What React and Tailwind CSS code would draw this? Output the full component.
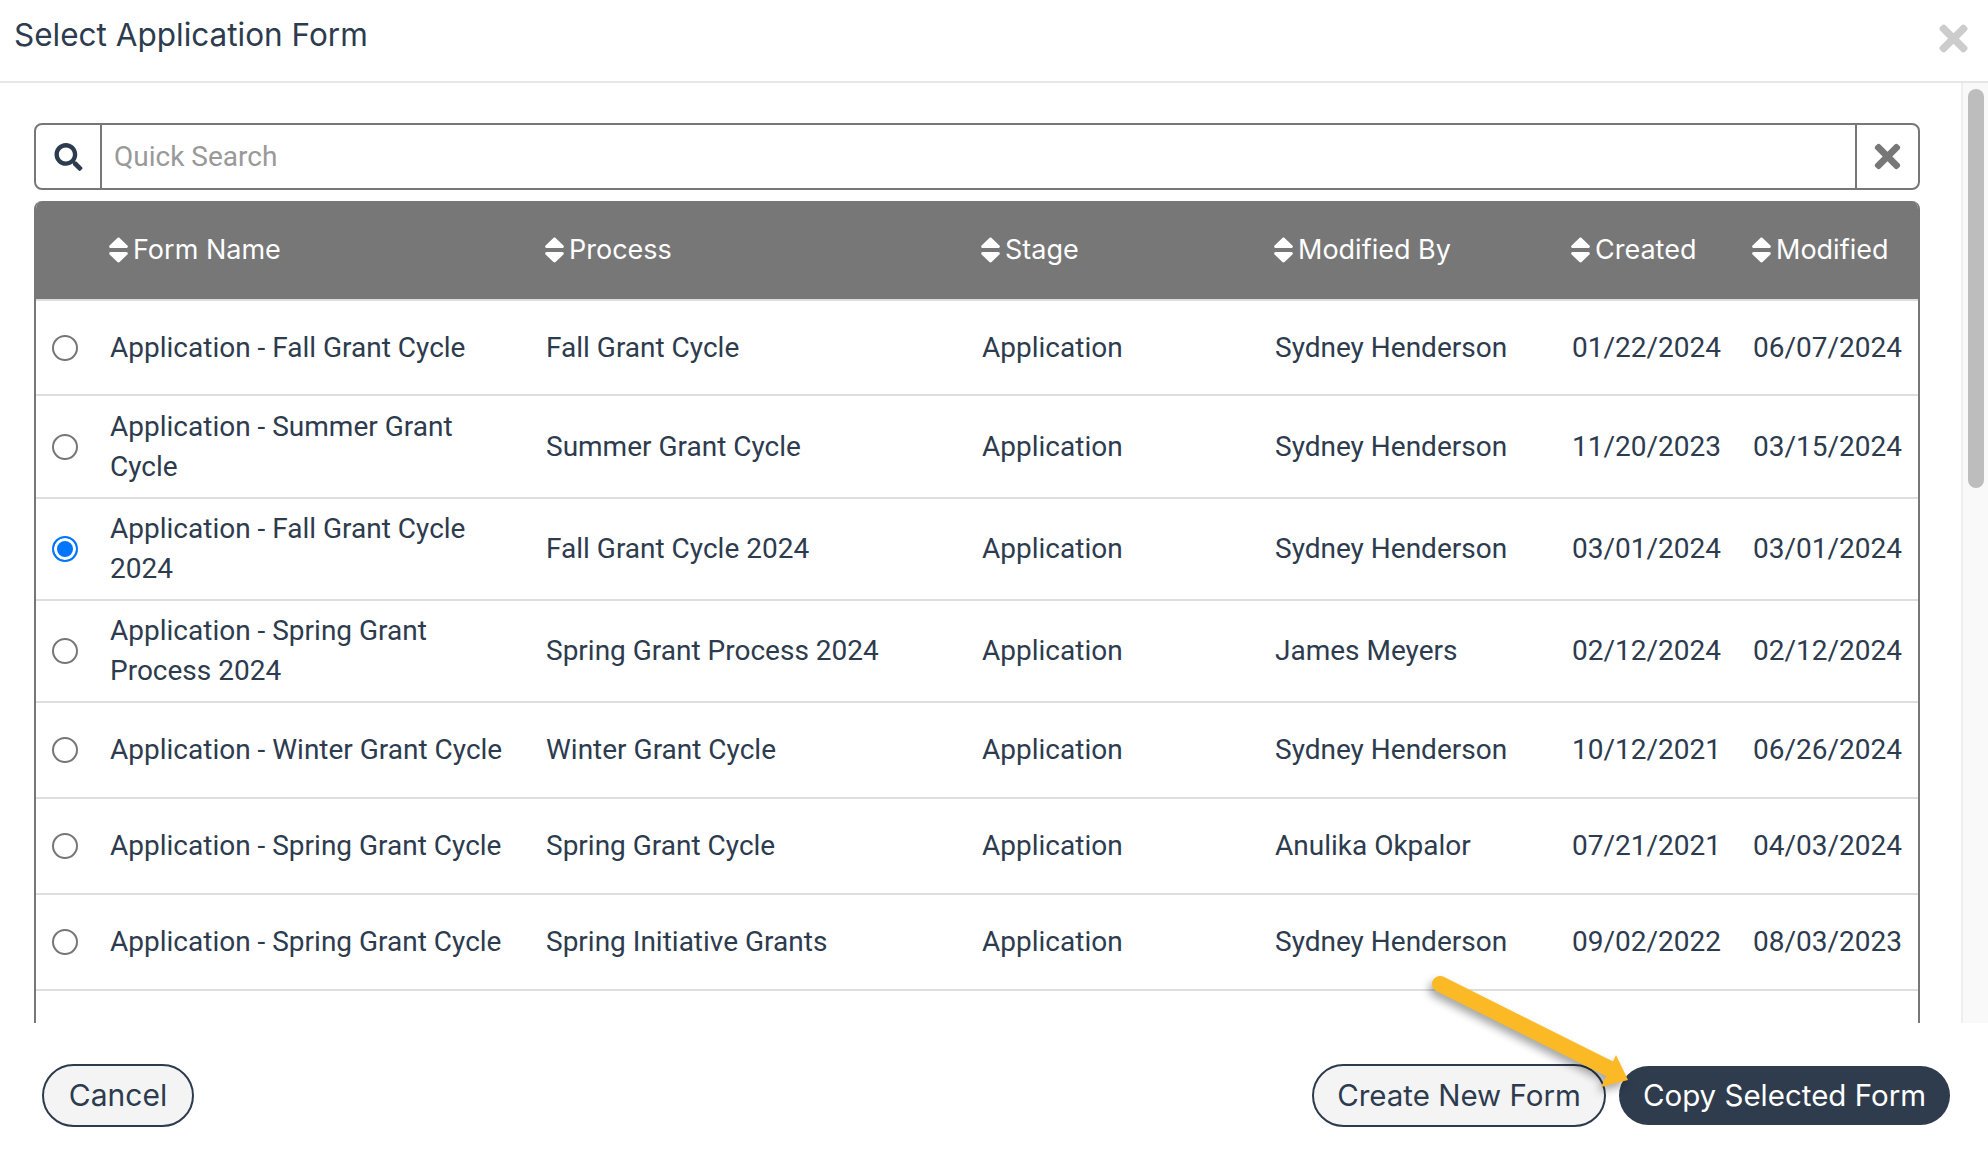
import React from "react";
import { FaSearch, FaTimes } from "react-icons/fa";

const heading = { fontFamily: '"Inter", "Noto Sans", sans-serif' };

function SortIcon() {
  return (
    <svg viewBox="0 0 320 512" preserveAspectRatio="none" className="w-[21px] h-[32px] shrink-0 fill-white">
      <path d="M41 288h238c21.4 0 32.1 25.9 17 41L177 448c-9.4 9.4-24.6 9.4-33.9 0L24 329c-15.1-15.1-4.4-41 17-41zm255-105L177 64c-9.4-9.4-24.6-9.4-33.9 0L24 183c-15.1 15.1-4.4 41 17 41h238c21.4 0 32.1-25.9 17-41z" />
    </svg>
  );
}

const columns = [
  { label: "Form Name", width: "w-[436px]" },
  { label: "Process", width: "w-[436px]" },
  { label: "Stage", width: "w-[293px]" },
  { label: "Modified By", width: "w-[297px]" },
  { label: "Created", width: "w-[181px]" },
  { label: "Modified", width: "w-[178px]" },
];

const rows = [
  { h: "h-[95px]", name: "Application - Fall Grant Cycle", process: "Fall Grant Cycle", by: "Sydney Henderson", created: "01/22/2024", modified: "06/07/2024" },
  { h: "h-[103px]", name: "Application - Summer Grant Cycle", process: "Summer Grant Cycle", by: "Sydney Henderson", created: "11/20/2023", modified: "03/15/2024" },
  { h: "h-[102px]", name: "Application - Fall Grant Cycle 2024", process: "Fall Grant Cycle 2024", by: "Sydney Henderson", created: "03/01/2024", modified: "03/01/2024", checked: true },
  { h: "h-[102px]", name: "Application - Spring Grant Process 2024", process: "Spring Grant Process 2024", by: "James Meyers", created: "02/12/2024", modified: "02/12/2024" },
  { h: "h-[96px]", name: "Application - Winter Grant Cycle", process: "Winter Grant Cycle", by: "Sydney Henderson", created: "10/12/2021", modified: "06/26/2024" },
  { h: "h-[96px]", name: "Application - Spring Grant Cycle", process: "Spring Grant Cycle", by: "Anulika Okpalor", created: "07/21/2021", modified: "04/03/2024" },
  { h: "h-[96px]", name: "Application - Spring Grant Cycle", process: "Spring Initiative Grants", by: "Sydney Henderson", created: "09/02/2022", modified: "08/03/2023" },
];

function Row({ row }) {
  return (
    <tr className={`${row.h} border-b-2 border-[#dedede]`}>
      <td className="pl-[16px] align-middle">
        <input
          type="radio"
          name="form"
          defaultChecked={row.checked}
          className="block w-[26px] h-[26px] m-0 appearance-none rounded-full border-2 border-[#767676] bg-white checked:border-[#0075ff] checked:bg-[#0075ff] checked:shadow-[inset_0_0_0_3px_#ffffff]"
        />
      </td>
      <td className="pl-[13px] pr-[24px] align-middle">{row.name}</td>
      <td className="pl-[13px] align-middle">{row.process}</td>
      <td className="pl-[13px] align-middle">Application</td>
      <td className="pl-[13px] align-middle">{row.by}</td>
      <td className="pl-[13px] align-middle">{row.created}</td>
      <td className="pl-[13px] align-middle">{row.modified}</td>
    </tr>
  );
}

export default function App() {
  return (
    <div
      className="relative h-screen w-full flex flex-col bg-white text-[#2d3b4e] overflow-hidden"
      style={{ fontFamily: '"Roboto", "Liberation Sans", sans-serif' }}
    >
      <header className="h-[83px] shrink-0 border-b-2 border-[#e6e6e6] flex items-start justify-between pl-[14px] pr-[14px]">
        <h1 className="mt-[14px] text-[31.5px] leading-[42px] font-normal" style={heading}>
          Select Application Form
        </h1>
        <FaTimes className="mt-[18px] w-[41px] h-[41px] text-[#cccccc]" />
      </header>

      <div className="flex-1 min-h-0 flex">
        <main className="flex-1 min-w-0 pt-[40px] pl-[34px] pr-[41px] flex flex-col">
          <div className="h-[67px] shrink-0 flex items-stretch border-2 border-[#777777] rounded-lg">
            <div className="w-[66px] shrink-0 flex items-center justify-center border-r-2 border-[#777777]">
              <FaSearch className="w-[29px] h-[28px] text-[#2d3b4e]" />
            </div>
            <input
              type="text"
              placeholder="Quick Search"
              className="flex-1 min-w-0 px-[12px] text-[28px] outline-none placeholder:text-[#999999]"
            />
            <div className="w-[63px] shrink-0 flex items-center justify-center border-l-2 border-[#777777]">
              <FaTimes className="w-[37px] h-[37px] text-[#777777]" />
            </div>
          </div>

          <div className="mt-[11px] flex-1 min-h-0 overflow-hidden border-x-2 border-[#777777] rounded-t-lg bg-white">
            <table className="w-full table-fixed border-collapse text-[28px] leading-[40px]">
              <colgroup>
                <col className="w-[61px]" />
                {columns.map((c) => (
                  <col key={c.label} className={c.width} />
                ))}
              </colgroup>
              <thead>
                <tr className="h-[99px] bg-[#777777] border-b-2 border-[#dedede] text-white">
                  <th />
                  {columns.map((c) => (
                    <th key={c.label} className="pl-[11px] text-left font-normal align-middle">
                      <span className="flex items-center gap-[4px] text-[27px]" style={heading}>
                        <SortIcon />
                        {c.label}
                      </span>
                    </th>
                  ))}
                </tr>
              </thead>
              <tbody>
                {rows.map((r, i) => (
                  <Row key={i} row={r} />
                ))}
              </tbody>
            </table>
          </div>
        </main>

        <div className="w-[27px] shrink-0 border-l-2 border-[#eeeeee] bg-[#f9f9f9] pt-[6px] pl-[5px]">
          <div className="w-[16px] h-[399px] rounded-full bg-[#bdbdbd]" />
        </div>
      </div>

      <footer className="h-[143px] shrink-0 flex items-center justify-between pl-[42px] pr-[38px] pt-[2px]" style={heading}>
        <button className="w-[152px] h-[63px] rounded-full border-2 border-[#2d3b4e] bg-[#f4f4f4] text-[30px]">
          Cancel
        </button>
        <div className="flex items-center gap-[13px]">
          <button className="w-[294px] h-[63px] rounded-full border-2 border-[#2d3b4e] bg-[#f4f4f4] text-[29.5px]">
            Create New Form
          </button>
          <button className="w-[331px] h-[59px] rounded-full bg-[#2f3c4d] text-white text-[29.5px]">
            Copy Selected Form
          </button>
        </div>
      </footer>

      <svg
        viewBox="0 0 1988 1166"
        className="absolute inset-0 w-full h-full pointer-events-none drop-shadow-[-3px_5px_4px_rgba(0,0,0,0.35)]"
      >
        <line x1="1440" y1="984" x2="1612" y2="1070" stroke="#fbb926" strokeWidth="16" strokeLinecap="round" />
        <polygon points="1616,1055 1628,1080 1601,1087" fill="#fbb926" />
      </svg>
    </div>
  );
}
